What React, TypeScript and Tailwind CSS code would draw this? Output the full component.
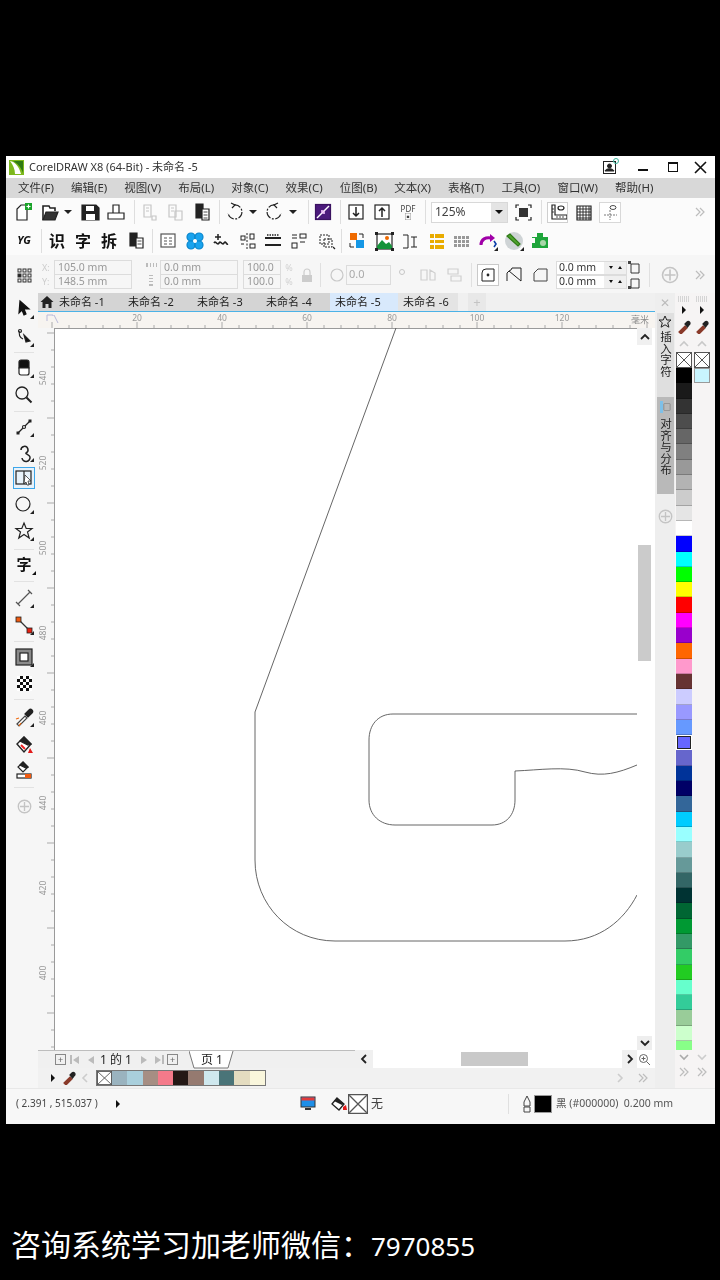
import React from "react";

const Ic = ({ w = 24, h = 24, className = "", children }: { w?: number; h?: number; className?: string; children?: React.ReactNode }) => (
  <svg width={w} height={h} viewBox={`0 0 ${w} ${h}`} className={`shrink-0 ${className}`} fill="none" stroke="#222" strokeWidth={1.2}>
    {children}
  </svg>
);

const Caret = () => (
  <div className="flex h-6 w-3 shrink-0 items-center justify-center">
    <div className="h-0 w-0 border-x-[4px] border-t-[4px] border-x-transparent border-t-[#222]" />
  </div>
);
const Sep = ({ className = "" }: { className?: string }) => <div className={`h-6 w-px shrink-0 bg-[#dedede] ${className}`} />;
const HSep = () => <div className="mx-auto h-px w-5 shrink-0 bg-[#e2e2e2]" />;
const Corner = () => <path d="M22 22h-4l4-4z" fill="#222" stroke="none" />;
const More = ({ className = "" }: { className?: string }) => (
  <svg width="14" height="12" viewBox="0 0 14 12" className={`shrink-0 ${className}`} fill="none" stroke="#bdbdbd" strokeWidth={1.2}>
    <path d="M3 2l4 4-4 4M7 2l4 4-4 4" />
  </svg>
);
const Plus = ({ size = 18, className = "" }: { size?: number; className?: string }) => (
  <svg width={size} height={size} viewBox="0 0 18 18" className={`shrink-0 ${className}`} fill="none" stroke="#c4c4c4" strokeWidth={1.6}>
    <circle cx="9" cy="9" r="7.5" />
    <path d="M9 3.5v11M3.5 9h11" />
  </svg>
);
const CrossBox = ({ className = "" }: { className?: string }) => (
  <svg viewBox="0 0 16 16" preserveAspectRatio="none" className={`block ${className}`} fill="#fff" stroke="#555" strokeWidth={1}>
    <rect x="0.5" y="0.5" width="15" height="15" />
    <path d="M1 1l14 14M15 1L1 15" />
  </svg>
);
const Dropper = ({ tip = "#8a3a2a" }: { tip?: string }) => (
  <Ic w={14} h={14}>
    <path d="M2 12l6-6 2 2-6 6z" fill={tip} stroke={tip} />
    <path d="M8 4l2-2a1.5 1.5 0 0 1 2.5 2.5L10.500 7z" fill="#222" stroke="#222" />
  </Ic>
);
const TriRight = ({ className = "" }: { className?: string }) => (
  <div className={`h-0 w-0 shrink-0 border-y-[4px] border-l-[4px] border-y-transparent border-l-[#111] ${className}`} />
);

const Toolbar1 = () => (
  <div className="flex h-[30px] items-center bg-[#fbfbfb] pb-[2px]">
    <Ic className="ml-[6px]"><path d="M5 20V9l4-4h6v15z" fill="#fff" /><rect x="13" y="3" width="7" height="7" fill="#1aa32a" stroke="none" /><path d="M16.500 4.500v4M14.500 6.500h4" stroke="#fff" /></Ic>
    <Ic className="ml-[2px]"><path d="M5 20V6h6l1 2h5v3" fill="#fff" strokeWidth={1.6} /><path d="M5 20l3-8h12l-3 8z" fill="#333" strokeWidth={1.2} /></Ic>
    <Caret />
    <Ic className="ml-1"><path d="M4 5h14l3 3v12H4z" fill="#222" /><rect x="8" y="6" width="8" height="5" fill="#fff" stroke="none" /><rect x="8" y="14" width="9" height="6" fill="#fff" stroke="none" /></Ic>
    <Ic className="ml-[2px]"><path d="M9 13V5h6v8M4 13h5M15 13h5v6H4v-6z" fill="#fff" /></Ic>
    <Sep className="ml-[6px]" />
    <Ic className="ml-[3px]"><g stroke="#c6c6c6"><path d="M6 5h7v12H6z" /><path d="M8 8h3M8 11h3" /><path d="M14 16h4v4h-4z" /></g></Ic>
    <Ic className="ml-[1px]"><g stroke="#c6c6c6"><path d="M6 5h7v12H6z" /><path d="M8 8h3M8 11h3" /><path d="M12 11h7v9h-7z" /></g></Ic>
    <Ic className="ml-[3px]"><path d="M6 4h7v14H6z" fill="#222" /><path d="M12 9h7v11h-7z" fill="#fff" /><path d="M13.500 12h4M13.500 15h4M13.500 18h4" strokeWidth={0.8} /></Ic>
    <Sep className="ml-[5px]" />
    <Ic className="ml-[3px]"><path d="M11 5a7 7 0 1 1-6 8" strokeDasharray="7 1.500 2 1.500" /><path d="M8 3l4 2-3 3" /></Ic>
    <Caret />
    <Ic className="ml-[3px]"><path d="M13 5a7 7 0 1 0 6 8" strokeDasharray="7 1.500 2 1.500" /><path d="M16 3l-4 2 3 3" /></Ic>
    <div className="ml-px"><Caret /></div>
    <Sep className="ml-[9px]" />
    <Ic className="ml-[2px]"><rect x="4.500" y="4.500" width="15" height="15" fill="#4b1a7c" stroke="#3a1260" /><path d="M6 18L18 6" stroke="#fff" strokeWidth={1.500} /><path d="M14 13l-3 0 0-3M10 11l3 0 0 3" stroke="#f5c6ff" /></Ic>
    <Sep className="ml-[5px]" />
    <Ic className="ml-[3px]"><rect x="5" y="5" width="14" height="14" fill="#fff" /><path d="M12 7v9M9 13l3 3 3-3" strokeWidth={1.500} /></Ic>
    <Ic className="ml-[2px]"><rect x="5" y="5" width="14" height="14" fill="#fff" /><path d="M12 17V8M9 11l3-3 3 3" strokeWidth={1.500} /></Ic>
    <div className="ml-[2px] flex h-6 w-6 shrink-0 flex-col items-center justify-center text-[8px] leading-[8px] text-[#444]">
      <span>PDF</span>
      <span className="text-[7px] leading-[7px]">▣</span>
    </div>
    <Sep className="ml-[5px]" />
    <div className="ml-[5px] flex h-[21px] w-[77px] shrink-0 items-center border border-[#d8d8d8] bg-white">
      <span className="flex-1 pl-[3px] text-[12px] text-[#444]">125%</span>
      <div className="flex h-full w-[16px] items-center justify-center bg-[#e4e4e4]">
        <div className="h-0 w-0 border-x-[4px] border-t-[4px] border-x-transparent border-t-[#111]" />
      </div>
    </div>
    <Ic className="ml-[3px]"><rect x="8" y="8" width="9" height="9" fill="#333" stroke="none" /><path d="M5 8V5h3M17 5h3v3M20 17v3h-3M8 20H5v-3" /></Ic>
    <Sep className="ml-[6px]" />
    <div className="ml-[5px] flex h-[21px] w-[21px] shrink-0 items-center justify-center border border-[#cfcfcf] bg-white">
      <Ic w={18} h={18}><path d="M3 2h3v10h12v4H3z" fill="#fff" /><ellipse cx="12" cy="5" rx="3" ry="2" /><path d="M3 6h2M3 9h2M8 13v2M11 13v2M14 13v2" strokeWidth={0.8} /></Ic>
    </div>
    <Ic className="ml-1"><path d="M5 6h14v14H5z" fill="#fff" /><path d="M5 9h14M5 12h14M5 15h14M5 18h14M8 6v14M11 6v14M14 6v14M17 6v14" strokeWidth={0.9} /></Ic>
    <div className="ml-[3px] flex h-[21px] w-[22px] shrink-0 items-center justify-center border border-[#d8d8d8] bg-white">
      <Ic w={18} h={18}><path d="M9 7v10M3 12h13" strokeDasharray="2 1" strokeWidth={0.8} stroke="#555" /><ellipse cx="12" cy="4.500" rx="3" ry="2" strokeWidth={0.8} /></Ic>
    </div>
    <More className="ml-auto mr-[8px]" />
  </div>
);

const Toolbar2 = () => (
  <div className="flex h-[27px] items-center bg-[#fbfbfb] pb-[2px]">
    <span className="ml-[4px] w-7 shrink-0 text-center text-[11px] font-bold italic text-[#111]">YG</span>
    <Sep className="ml-[3px]" />
    <span className="ml-[3px] w-6 shrink-0 text-center text-[16px] font-bold leading-none text-[#111]">识</span>
    <span className="ml-[2px] w-6 shrink-0 text-center text-[16px] font-bold leading-none text-[#111]">字</span>
    <span className="ml-[2px] w-6 shrink-0 text-center text-[16px] font-bold leading-none text-[#111]">拆</span>
    <Ic className="ml-[3px]"><path d="M6 4h7v13H6z" fill="#222" /><path d="M12 9h7v10h-7z" fill="#fff" /><path d="M13.500 12h4M13.500 15h4" strokeWidth={0.8} /></Ic>
    <Sep className="ml-[4px]" />
    <Ic className="ml-[3px]"><rect x="5" y="5" width="14" height="13" fill="#fff" stroke="#555" /><path d="M8 9h3M13 9h3M8 12h3M13 12h3M8 15h3M13 15h3" stroke="#555" /></Ic>
    <Ic className="ml-[3px]"><g fill="#19a3ee" stroke="#0a86cc"><circle cx="8" cy="8" r="4" /><circle cx="16" cy="8" r="4" /><circle cx="8" cy="16" r="4" /><circle cx="16" cy="16" r="4" /></g><circle cx="12" cy="12" r="2" fill="#fff" stroke="none" /></Ic>
    <Ic className="ml-[2px]"><path d="M5 14c2-3 3 3 5 0s3 3 5 0 2 2 4 1" strokeWidth={1.600} /><path d="M9 5v6M6 8h6" strokeWidth={1.500} /></Ic>
    <Ic className="ml-[2px]"><g strokeWidth={1}><rect x="6" y="7" width="4" height="4" /><rect x="15" y="5" width="4" height="5" /><rect x="15" y="15" width="5" height="4" /><path d="M12 4v17" strokeDasharray="2 1.500" /><path d="M6 15h3" /></g></Ic>
    <Ic className="ml-[2px]"><path d="M4 9h16M4 16h16" strokeWidth={2} /><path d="M6 6h12" strokeDasharray="1.500 1" strokeWidth={1.500} /></Ic>
    <Ic className="ml-[2px]"><g strokeWidth={1}><rect x="13" y="5" width="6" height="4" /><rect x="5" y="14" width="5" height="5" /><path d="M5 6h5M5 9h5M13 13h5" /></g></Ic>
    <Ic className="ml-[3px]"><g strokeDasharray="2 1" strokeWidth={1}><rect x="6" y="6" width="9" height="9" /><rect x="10" y="10" width="8" height="8" /></g><path d="M19 18l2 2" /></Ic>
    <Sep className="ml-[3px]" />
    <Ic className="ml-[3px]"><rect x="5" y="4" width="7" height="7" fill="#ef6a00" stroke="none" /><rect x="11" y="11" width="8" height="8" fill="#1597e5" stroke="none" /><path d="M14 5h4v4M5 14v4h4" strokeWidth={1} /></Ic>
    <Ic className="ml-[3px]"><rect x="5" y="5" width="15" height="15" fill="#fff" /><path d="M5 17l5-6 4 4 3-2 3 4v3H5z" fill="#14933a" stroke="none" /><circle cx="15" cy="9" r="2" fill="#ef6a00" stroke="none" /><path d="M3 3h3v3H3zM19 3h3v3h-3zM3 19h3v3H3zM19 19h3v3h-3z" fill="#222" stroke="none" /></Ic>
    <Ic className="ml-[3px]"><path d="M4 6h5v13H4M12 8h6M12 18h6M15 8v10" strokeWidth={1} /></Ic>
    <Ic className="ml-[2px]"><path d="M5 5h4v4H5zM5 11h4v3H5zM5 16h4v4H5zM10 5h9v4h-9zM10 11h9v3h-9zM10 16h9v4h-9z" fill="#e9ac00" stroke="none" /></Ic>
    <Ic><g fill="#999" stroke="none"><path d="M5 7h3v3H5zM9 7h3v3H9zM13 7h3v3h-3zM17 7h3v3h-3zM5 11h3v3H5zM9 11h3v3H9zM13 11h3v3h-3zM17 11h3v3h-3zM5 15h3v3H5zM9 15h3v3H9zM13 15h3v3h-3zM17 15h3v3h-3z" /></g></Ic>
    <Ic className="ml-[3px]"><path d="M5 16c0-6 5-8 10-7" stroke="#a000a8" strokeWidth={3} /><path d="M14 5l5 4-5 4z" fill="#a000a8" stroke="none" /><path d="M18 12l2 3-2 3" stroke="#0a3ea8" strokeWidth={1.600} /><Corner /></Ic>
    <Ic className="ml-[2px]"><circle cx="12" cy="12" r="9" fill="#cfd4d6" stroke="none" /><path d="M5 7l11 10 2-2L8 5z" fill="#4fa32e" stroke="#2f7a16" /><Corner /></Ic>
    <Ic className="ml-[2px]"><path d="M9 4h6v4h5v11H4v-5h3V9H4V8h5z" fill="#1ea53b" stroke="none" /><circle cx="15" cy="14" r="3" fill="#a9d6a9" stroke="none" /></Ic>
  </div>
);

const Field = ({ children, w }: { children: React.ReactNode; w: string }) => (
  <div className={`flex h-[15px] items-center border border-[#dcdcdc] pl-[3px] text-[10.500px] leading-none text-[#999] ${w}`}>{children}</div>
);

const PropertyBar = () => (
  <div className="flex h-[38px] items-center bg-[#f6f6f6] pt-[1px]">
    <Ic className="ml-[6px]" ><g strokeWidth={1} stroke="#333"><rect x="6" y="6" width="3" height="3" /><rect x="11" y="6" width="3" height="3" /><rect x="16" y="6" width="3" height="3" /><rect x="6" y="11" width="3" height="3" fill="#222" /><rect x="11" y="11" width="3" height="3" /><rect x="16" y="11" width="3" height="3" /><rect x="6" y="16" width="3" height="3" /><rect x="11" y="16" width="3" height="3" /><rect x="16" y="16" width="3" height="3" /></g></Ic>
    <div className="ml-[6px] flex w-[8px] shrink-0 flex-col text-[9px] leading-[14px] text-[#ccc]"><span>X:</span><span>Y:</span></div>
    <div className="ml-[4px] flex w-[78px] shrink-0 flex-col">
      <Field w="w-full">105.0 mm</Field>
      <Field w="w-full -mt-px">148.5 mm</Field>
    </div>
    <div className="ml-[12px] flex w-[14px] shrink-0 flex-col items-center gap-[8px]">
      <div className="h-[4px] w-[11px] border-x border-[#bbb] bg-[repeating-linear-gradient(90deg,#bbb_0_1px,transparent_1px_3px)]" />
      <div className="h-[11px] w-[4px] border-y border-[#bbb] bg-[repeating-linear-gradient(0deg,#bbb_0_1px,transparent_1px_3px)]" />
    </div>
    <div className="ml-[2px] flex w-[78px] shrink-0 flex-col">
      <Field w="w-full">0.0 mm</Field>
      <Field w="w-full -mt-px">0.0 mm</Field>
    </div>
    <div className="ml-[5px] flex w-[38px] shrink-0 flex-col">
      <Field w="w-full">100.0</Field>
      <Field w="w-full -mt-px">100.0</Field>
    </div>
    <div className="ml-[2px] flex w-[12px] shrink-0 flex-col text-center text-[9px] leading-[14px] text-[#d2d2d2]"><span>%</span><span>%</span></div>
    <Ic w={14} h={16} className="ml-[5px]"><path d="M4 8V5a3 3 0 0 1 6 0v3" stroke="#ccc" /><rect x="2" y="8" width="10" height="7" fill="#ccc" stroke="none" /></Ic>
    <div className="ml-[6px] h-6 w-px shrink-0 bg-[#e0e0e0]" />
    <Ic w={16} h={16} className="ml-[8px]"><circle cx="8" cy="8" r="6" stroke="#c8c8c8" /></Ic>
    <div className="ml-[1px] flex h-[20px] w-[45px] shrink-0 items-center border border-[#dcdcdc] bg-[#f6f6f6] pl-[2px] text-[11px] text-[#aaa]">0.0</div>
    <div className="ml-[8px] h-[6px] w-[6px] shrink-0 -translate-y-[3px] rounded-full border border-[#c6c6c6]" />
    <Ic w={20} h={18} className="ml-[13px]"><g stroke="#cfcfcf"><path d="M3 4h6v10H3zM12 4l5 3v7h-5z" /></g></Ic>
    <Ic w={20} h={18} className="ml-[6px]"><g stroke="#cfcfcf"><path d="M4 3h10v5H4zM7 10h10v5H7z" /></g></Ic>
    <div className="ml-[7px] h-6 w-px shrink-0 bg-[#e0e0e0]" />
    <div className="ml-[5px] flex h-[22px] w-[22px] shrink-0 items-center justify-center border border-[#c9c9c9] bg-white">
      <Ic w={18} h={18}><path d="M3 15V7a4 4 0 0 1 4-4h8v12z" strokeWidth={1} /><circle cx="9" cy="9" r="0.800" fill="#222" /></Ic>
    </div>
    <Ic w={18} h={18} className="ml-[6px]"><path d="M2 15V7l2-2M4 5a4 4 0 0 0 3-3h9v13z" strokeWidth={1} fill="none" /></Ic>
    <Ic w={18} h={18} className="ml-[8px]"><path d="M3 15V7l4-4h9v12z" strokeWidth={1} stroke="#444" /></Ic>
    <div className="ml-[7px] flex w-[71px] shrink-0 flex-col">
      {["0.0 mm", "0.0 mm"].map((v, i) => (
        <div key={i} className="flex h-[14px] items-center border border-[#dcdcdc] bg-white text-[10.500px] text-[#333]">
          <span className="flex-1 pl-[2px] leading-none">{v}</span>
          <span className="flex h-full w-[22px] items-center justify-around bg-[#efefef] px-[2px]">
            <span className="h-0 w-0 border-x-[2.500px] border-t-[3px] border-x-transparent border-t-[#111]" />
            <span className="h-0 w-0 border-x-[2.500px] border-b-[3px] border-x-transparent border-b-[#111]" />
          </span>
        </div>
      ))}
    </div>
    <Ic w={14} h={28} className="ml-[1px]"><path d="M3 3h8v9H3zM3 18h8v9H3z" strokeWidth={0.9} /><path d="M0 0h3v3H0zM0 25h3v3H0z" fill="#444" stroke="none" /></Ic>
    <div className="ml-[7px] h-6 w-px shrink-0 bg-[#e0e0e0]" />
    <Plus className="ml-[11px]" />
    <More className="ml-auto mr-[8px]" />
  </div>
);

const tabNames = ["未命名 -1", "未命名 -2", "未命名 -3", "未命名 -4"];

const DocTabs = () => (
  <div className="flex h-[18px] items-stretch bg-[#f0f0f0] text-[11px] leading-[18px] text-[#222]">
    <div className="flex w-[292px] shrink-0 items-center bg-[#d4d4d4]">
      <svg width="14" height="14" viewBox="0 0 14 14" className="ml-[2px] shrink-0"><path d="M7 1L0.500 7h2v6h3V9h3v4h3V7h2z" fill="#222" /></svg>
      <div className="ml-[5px] flex gap-[21px]">
        {tabNames.map((t) => (
          <span key={t} className="w-[48px] whitespace-nowrap">{t}</span>
        ))}
      </div>
    </div>
    <div className="w-[68px] shrink-0 whitespace-nowrap bg-[#d8e9fc] pl-[5px]">未命名 -5</div>
    <div className="w-[60px] shrink-0 whitespace-nowrap bg-[#e4e4e4] pl-[5px]">未命名 -6</div>
    <div className="ml-[10px] flex w-[18px] shrink-0 items-center justify-center bg-[#e8e8e8] text-[13px] text-[#c4c4c4]">+</div>
  </div>
);

const HRuler = () => (
  <svg width="617" height="16" viewBox="0 0 617 16" className="block shrink-0 bg-[#f7f4f0]">
    <path d="M16 3l4 8M9 3h6v1M9 3v6" stroke="#b9b9d9" fill="none" />
    {[[99, "20"], [184, "40"], [269, "60"], [354, "80"], [439, "100"], [524, "120"]].map(([x, t]) => (
      <text key={t} x={x as number} y="9" textAnchor="middle" fontSize="8.500" fill="#999">{t}</text>
    ))}
    <text x="602" y="11" textAnchor="middle" fontSize="9" fill="#888">毫米</text>
    {Array.from({ length: 36 }, (_, i) => (
      <path key={i} d={`M${14 + i * 17} ${i % 5 === 0 ? 10 : 13}V16`} stroke="#aaa" />
    ))}
  </svg>
);

const VRuler = () => (
  <svg width="16" height="722" viewBox="0 0 16 722" className="block shrink-0 bg-[#f6f6f6]">
    {[[50, "540"], [135, "520"], [220, "500"], [305, "480"], [390, "460"], [475, "440"], [560, "420"], [645, "400"]].map(([y, t]) => (
      <text key={t} transform={`translate(8 ${y}) rotate(-90)`} textAnchor="middle" fontSize="8.500" fill="#999">{t}</text>
    ))}
    {Array.from({ length: 43 }, (_, i) => (
      <path key={i} d={`M${i % 5 === 0 ? 9 : 13} ${5 + i * 17}H16`} stroke="#aaa" />
    ))}
  </svg>
);

const Canvas = () => (
  <div className="relative h-[722px] w-[583px] shrink-0 border-l border-t border-[#9a9a9a] bg-white">
    <svg width="583" height="722" viewBox="54 328 583 722" className="absolute -left-px -top-px" fill="none" stroke="#555" strokeWidth={0.9}>
      <path d="M396 328L255 712V860C255 905 290 941 335 941H565C600 941 624 920 637 895" />
      <path d="M637 714H393C378 714 369 725 369 740V800C369 815 380 825 395 825H492C506 825 515 815 515 800V771C540 770 565 766 585 772C603 777 618 773 637 765" />
    </svg>
  </div>
);

const Chevron = ({ d }: { d: string }) => (
  <svg width="10" height="10" viewBox="0 0 10 10" fill="none" stroke="#222" strokeWidth={1.800}><path d={d} /></svg>
);

const VScroll = () => (
  <div className="flex h-[722px] w-[15px] shrink-0 flex-col bg-white">
    <div className="flex h-[17px] items-center justify-center bg-[#f0f0f0]"><Chevron d="M1 7l4-4 4 4" /></div>
    <div className="mx-px mt-[200px] h-[116px] bg-[#cbcbcb]" />
    <div className="flex-1" />
    <div className="flex h-[14px] items-center justify-center bg-[#eeeeee]"><Chevron d="M1 3l4 4 4-4" /></div>
  </div>
);

const PageRow = () => (
  <div className="flex h-[18px] items-center bg-white">
    <div className="flex h-full w-[317px] shrink-0 items-center border-t border-[#bdbdbd] bg-[#f0f0f0] pl-[17px] text-[12px] leading-none text-[#222]">
      <span className="flex h-[11px] w-[11px] shrink-0 items-center justify-center border border-[#888] text-[9px] leading-none text-[#666]">+</span>
      <span className="ml-[4px] w-[3px] shrink-0 border-l-2 border-[#bbb] text-[9px] leading-none">&nbsp;</span>
      <span className="h-0 w-0 shrink-0 border-y-[4px] border-r-[6px] border-y-transparent border-r-[#bbb]" />
      <span className="ml-[9px] h-0 w-0 shrink-0 border-y-[4px] border-r-[6px] border-y-transparent border-r-[#bbb]" />
      <span className="ml-[6px] shrink-0 whitespace-nowrap">1 的 1</span>
      <span className="ml-[9px] h-0 w-0 shrink-0 border-y-[4px] border-l-[6px] border-y-transparent border-l-[#bbb]" />
      <span className="ml-[8px] h-0 w-0 shrink-0 border-y-[4px] border-l-[6px] border-y-transparent border-l-[#bbb]" />
      <span className="w-[3px] shrink-0 border-r-2 border-[#bbb] text-[9px] leading-none">&nbsp;</span>
      <span className="ml-[3px] flex h-[11px] w-[11px] shrink-0 items-center justify-center border border-[#888] text-[9px] leading-none text-[#666]">+</span>
      <div className="relative ml-[11px] flex h-[18px] w-[46px] shrink-0 items-center justify-center">
        <svg width="46" height="18" viewBox="0 0 46 18" className="absolute inset-0" fill="#fff" stroke="#777"><path d="M0 0L5 17H39L44 0" /></svg>
        <span className="relative whitespace-nowrap text-[12px]">页 1</span>
      </div>
    </div>
    <div className="flex h-full w-[18px] shrink-0 items-center justify-center bg-[#f0f0f0]"><Chevron d="M7 1L3 5l4 4" /></div>
    <div className="flex h-full flex-1 items-center">
      <div className="ml-[88px] h-[14px] w-[67px] bg-[#c9c9c9]" />
    </div>
    <div className="flex h-full w-[15px] shrink-0 items-center justify-center bg-[#f0f0f0]"><Chevron d="M3 1l4 4-4 4" /></div>
    <div className="flex h-full w-[15px] shrink-0 items-center justify-center">
      <svg width="13" height="13" viewBox="0 0 13 13" fill="none" stroke="#666"><circle cx="5.500" cy="5.500" r="4" /><path d="M8.500 8.500l3.500 3.500M3.500 5.500h4M5.500 3.500v4" /></svg>
    </div>
    <div className="w-[3px] shrink-0" />
  </div>
);

const recent = ["#9ab3bf", "#a9cfdc", "#a68e83", "#f47a8a", "#231815", "#957a70", "#cfe8ee", "#4a7478", "#e4dcc0", "#f9f6dc"];

const BottomPalette = () => (
  <div className="flex h-[20px] items-center bg-[#f1f1f1]">
    <TriRight className="ml-[13px]" />
    <div className="ml-[7px]"><Dropper /></div>
    <svg width="10" height="12" viewBox="0 0 10 12" fill="none" stroke="#ccc" strokeWidth={1.600} className="ml-[4px] shrink-0"><path d="M7 2L3 6l4 4" /></svg>
    <div className="ml-[6px] flex h-[16px] items-stretch border border-[#777]">
      <CrossBox className="h-[14px] w-[15px]" />
      {recent.map((c, i) => (
        <div key={i} className="w-[15.300px]" style={{ backgroundColor: c }} />
      ))}
    </div>
    <svg width="10" height="12" viewBox="0 0 10 12" fill="none" stroke="#ccc" strokeWidth={1.600} className="ml-auto shrink-0"><path d="M3 2l4 4-4 4" /></svg>
    <More className="ml-[11px] mr-[5px]" />
  </div>
);

const Docker = () => (
  <div className="flex h-[795px] w-[20px] shrink-0 flex-col items-center bg-[#eeeeee]">
    <span className="mt-[4px] h-[12px] text-[12px] leading-[12px] text-[#bbb]">✕</span>
    <div className="mt-[4px] flex h-[84px] w-[17px] flex-col items-center bg-[#dfdfdf] pt-[2px]">
      <svg width="14" height="14" viewBox="0 0 14 14" fill="none" stroke="#222"><path d="M7 1l1.800 4h4.200l-3.300 2.800 1.200 4.400L7 9.800l-3.900 2.400 1.200-4.400L1 5h4.200z" /></svg>
      <span className="mt-[2px] text-[11.500px] leading-[14px] text-[#222] [writing-mode:vertical-rl]">插入字符</span>
    </div>
    <div className="flex h-[97px] w-[17px] flex-col items-center bg-[#b9b9b9] pt-[4px]">
      <span className="h-[12px] w-[10px] border-l-[3px] border-[#7ec0e8] text-[8px] leading-[12px] text-[#333]">□</span>
      <span className="mt-[5px] text-[11.500px] leading-[14px] text-[#222] [writing-mode:vertical-rl]">对齐与分布</span>
    </div>
    <Plus size={15} className="mt-[15px]" />
  </div>
);

const colors = ["#000000", "#1a1a1a", "#333333", "#4d4d4d", "#666666", "#808080", "#999999", "#b3b3b3", "#cccccc", "#e5e5e5", "#ffffff", "#0000ff", "#00ffff", "#00ff00", "#ffff00", "#ff0000", "#ff00ff", "#9900cc", "#ff6600", "#ff99cc", "#663333", "#ccccff", "#9999ff", "#6699ff", "#6666ff", "#6666cc", "#003399", "#000066", "#336699", "#00ccff", "#99ffff", "#99cccc", "#669999", "#336666", "#003333", "#006633", "#009933", "#339966", "#33cc66", "#22cc22", "#66ffcc", "#33cc99", "#99cc99", "#ccffcc", "#88ff88"];

const PalHead = () => (
  <div className="flex h-[59px] shrink-0 flex-col items-center">
    <div className="mt-[3px] h-[6px] w-[12px] bg-[repeating-linear-gradient(90deg,#d5d5d5_0_1px,transparent_1px_2px)]" />
    <TriRight className="mt-[4px]" />
    <div className="mt-[6px]"><Dropper /></div>
    <svg width="12" height="8" viewBox="0 0 12 8" fill="none" stroke="#c8c8c8" strokeWidth={1.600} className="mt-[6px]"><path d="M2 6l4-4 4 4" /></svg>
  </div>
);
const PalFoot = ({ stroke = "#aaa" }: { stroke?: string }) => (
  <div className="flex h-[38px] shrink-0 flex-col items-center">
    <svg width="12" height="8" viewBox="0 0 12 8" fill="none" stroke={stroke} strokeWidth={1.600} className="mt-[3px]"><path d="M2 2l4 4 4-4" /></svg>
    <More className="mt-[5px]" />
  </div>
);

const Palettes = () => (
  <div className="flex h-[795px] shrink-0 bg-[#f6f4f4]">
    <div className="flex w-[18px] flex-col">
      <PalHead />
      <div className="flex-1 overflow-hidden px-px">
        <CrossBox className="h-[16px] w-[16px]" />
        {colors.map((c) => (
          <div key={c} className={c === "#6666ff" ? "h-[15.300px] border border-white outline-1 -outline-offset-2 outline-[#222]" : "h-[15.300px] border-b border-black/20"} style={{ backgroundColor: c }} />
        ))}
      </div>
      <PalFoot />
    </div>
    <div className="flex w-[18px] flex-col">
      <PalHead />
      <div className="flex-1 px-px">
        <CrossBox className="h-[16px] w-[16px]" />
        <div className="h-[15px] w-[16px] border border-[#9a9a9a] bg-[#c9f5ff]" />
      </div>
      <PalFoot stroke="#ccc" />
    </div>
  </div>
);

const StatusBar = () => (
  <div className="flex h-[36px] items-center border-t border-[#e8e8e8] bg-[#f7f7f7] pb-[6px] text-[10.500px] text-[#444]">
    <span className="ml-[10px] w-[92px] shrink-0 whitespace-nowrap text-[10px]">( 2.391 , 515.037 )</span>
    <TriRight className="ml-[8px]" />
    <svg width="16" height="16" viewBox="0 0 16 16" className="ml-[180px] shrink-0"><rect x="1" y="1" width="14" height="10" fill="#1e8fe8" stroke="#333" /><rect x="1.500" y="1.500" width="13" height="3" fill="#e23a3a" /><rect x="5" y="12" width="6" height="2" fill="#333" /></svg>
    <svg width="18" height="16" viewBox="0 0 18 16" className="ml-[14px] shrink-0" fill="none"><path d="M7 2l7 6-5 6-7-6z" fill="#fff" stroke="#222" strokeWidth={1.300} /><path d="M4 5l3-3 7 6-2 1z" fill="#222" /><path d="M13 11l3-2 1 5h-4z" fill="#e21a1a" /></svg>
    <CrossBox className="h-[20px] w-[20px] shrink-0" />
    <span className="ml-[3px] text-[12px] text-[#444]">无</span>
    <div className="ml-[125px] h-[20px] w-px shrink-0 bg-[#e0e0e0]" />
    <svg width="12" height="18" viewBox="0 0 12 18" fill="none" stroke="#444" className="ml-[12px] shrink-0"><path d="M6 1l3 6v4H3V7zM3 12h6v5H3z" /></svg>
    <div className="ml-[1px] h-[18px] w-[18px] shrink-0 border border-[#999] bg-black" />
    <span className="ml-[4px] whitespace-nowrap text-[#555]">黑 (#000000)&nbsp; 0.200 mm</span>
  </div>
);

const menu = ["文件(F)", "编辑(E)", "视图(V)", "布局(L)", "对象(C)", "效果(C)", "位图(B)", "文本(X)", "表格(T)", "工具(O)", "窗口(W)", "帮助(H)"];
const LeftIcon = ({ className = "", children }: { className?: string; children: React.ReactNode }) => (
  <Ic className={`mx-auto ${className}`}>{children}</Ic>
);

const Toolbox = () => (
  <div className="flex h-[795px] w-[32px] shrink-0 flex-col bg-[#f6f6f6] pl-[4px]">
    <LeftIcon className="mt-[4px]"><path d="M8 4l9 8-5 0 2 5-2 1-2-5-3 3z" fill="#111" stroke="#111" /><Corner /></LeftIcon>
    <LeftIcon className="mt-[4px]"><path d="M8 6c-2 3 0 7 3 8" /><circle cx="8" cy="6" r="1.500" /><path d="M12 10l6 6-4 1z" fill="#111" /><Corner /></LeftIcon>
    <div className="mt-[3px]"><HSep /></div>
    <LeftIcon className="mt-[3px]"><path d="M7 6a2 2 0 0 1 2-2h6a2 2 0 0 1 2 2v6H7z" fill="#111" /><path d="M7 12h10v5a2 2 0 0 1-2 2H9a2 2 0 0 1-2-2z" fill="#fff" /><Corner /></LeftIcon>
    <LeftIcon className="mt-[3px]"><circle cx="10" cy="10" r="6" strokeWidth={1.300} /><path d="M14.500 14.500l5 5" strokeWidth={2} /></LeftIcon>
    <div className="mt-[4px]"><HSep /></div>
    <LeftIcon className="mt-[3px]"><path d="M6 18L18 6" /><rect x="4.500" y="16.500" width="3" height="3" fill="#222" stroke="none" /><rect x="16.500" y="4.500" width="3" height="3" fill="#222" stroke="none" /><circle cx="12" cy="12" r="1.500" fill="#fff" /><Corner /></LeftIcon>
    <LeftIcon className="mt-px"><path d="M9 10a3.500 3.500 0 1 1 5 3c-1 .8 4 2 4 4a4 4 0 0 1-8 1" strokeWidth={1.500} /><Corner /></LeftIcon>
    <div className="mx-auto mt-[3px] flex h-[22px] w-[22px] shrink-0 items-center justify-center border border-[#3da6ea] bg-[#e8f2fa]">
      <Ic w={18} h={18}><rect x="1" y="2" width="15" height="13" strokeWidth={1.200} /><path d="M9 2v13" /><path d="M10 6l6 6-3 0 1 4-2 0-1-3-2 2z" fill="#fff" stroke="#333" strokeWidth={0.800} /></Ic>
    </div>
    <LeftIcon className="mt-[3px]"><circle cx="11" cy="12" r="7" strokeWidth={1.200} /><Corner /></LeftIcon>
    <LeftIcon className="mt-[3px]"><path d="M12 4l2.200 5.500H20l-4.500 3.500 1.700 6L12 15.500 6.800 19l1.700-6L4 9.500h5.800z" strokeWidth={1.200} /><Corner /></LeftIcon>
    <div className="mt-[6px]"><HSep /></div>
    <div className="relative mx-auto mt-[2px] flex h-6 w-6 shrink-0 items-center justify-center text-[15px] font-bold leading-none text-[#111]">字
      <span className="absolute bottom-[1px] right-0 h-0 w-0 border-b-[4px] border-l-[4px] border-b-[#111] border-l-transparent" />
    </div>
    <div className="mt-[5px]"><HSep /></div>
    <LeftIcon className="mt-[4px]"><path d="M6 18L18 6M4 16l4 4M16 4l4 4" stroke="#555" /><Corner /></LeftIcon>
    <LeftIcon className="mt-[3px]"><path d="M7 7l11 11" stroke="#333" strokeWidth={1.300} /><rect x="4" y="4" width="5" height="5" fill="#ef5a10" stroke="#222" strokeWidth={0.800} /><rect x="15" y="15" width="5" height="5" fill="#e82010" stroke="#222" strokeWidth={0.800} /><Corner /></LeftIcon>
    <div className="mt-[4px]"><HSep /></div>
    <LeftIcon className="mt-[3px]"><rect x="4" y="4" width="16" height="16" fill="#8a8a8a" /><rect x="8" y="8" width="8" height="8" fill="#fff" /><Corner /></LeftIcon>
    <LeftIcon className="mt-[2px]"><rect x="5" y="5" width="15" height="15" fill="#111" stroke="none" /><path d="M5 5h3v3H5zM11 5h3v3h-3zM17 5h3v3h-3zM8 8h3v3H8zM14 8h3v3h-3zM5 11h3v3H5zM11 11h3v3h-3zM17 11h3v3h-3zM8 14h3v3H8zM14 14h3v3h-3zM5 17h3v3H5zM11 17h3v3h-3zM17 17h3v3h-3z" fill="#fff" stroke="none" /></LeftIcon>
    <div className="mt-[4px]"><HSep /></div>
    <LeftIcon className="mt-[5px]"><path d="M5 19l8-8 2 2-8 8z" fill="#fff" stroke="#444" /><path d="M13 9l4-4a2 2 0 0 1 3 3l-4 4z" fill="#222" /><path d="M4 14l3-1M9 18l-2 3" stroke="#ef6a10" /><Corner /></LeftIcon>
    <LeftIcon className="mt-[4px]"><path d="M12 4l7 7-7 8-7-8z" fill="#fff" strokeWidth={1.400} /><path d="M8 8l4-4 7 7-3 1z" fill="#222" /><path d="M9 12l4 4" stroke="#e22" strokeWidth={2} /><path d="M18 15l3 5h-5z" fill="#e21a1a" stroke="none" /></LeftIcon>
    <LeftIcon className="mt-[2px]"><path d="M11 3l5 5-5 5-5-5z" fill="#fff" /><path d="M8 6l3-3 5 5-2 1z" fill="#222" /><rect x="5" y="15" width="14" height="4" fill="#fff" /><rect x="13" y="15" width="6" height="4" fill="#ef5a10" stroke="none" /></LeftIcon>
    <div className="mt-[4px]"><HSep /></div>
    <div className="mx-auto mt-[11px]"><Plus size={15} /></div>
  </div>
);

export default function App() {
  return (
    <div className="flex h-[1280px] w-[720px] flex-col overflow-hidden bg-black font-['Noto_Sans','Noto_Sans_CJK_SC',sans-serif]">
      <div className="h-[156px] shrink-0" />
      <div className="ml-[6px] flex h-[968px] w-[709px] shrink-0 flex-col overflow-hidden bg-[#f6f6f6] blur-[0.5px]">
        <div className="flex h-[22px] shrink-0 items-center bg-white">
          <svg width="15" height="15" viewBox="0 0 15 15" className="ml-[3px] shrink-0"><rect width="15" height="15" fill="#7db81c" /><path d="M1 1c5 1 9 5 11 13H6C6 9 4 5 1 1z" fill="#fff" /><path d="M4 1h10v12C12 7 8 3 4 1z" fill="#2f7a14" /></svg>
          <span className="ml-[5px] text-[11px] text-[#333]">CorelDRAW X8 (64-Bit) - 未命名 -5</span>
          <svg width="18" height="18" viewBox="0 0 18 18" className="ml-auto shrink-0" fill="none" stroke="#222"><rect x="1.500" y="3.500" width="12" height="12" /><circle cx="7.500" cy="8" r="2" fill="#222" /><path d="M3 13c1-3 8-3 9 0z" fill="#222" /><circle cx="14" cy="3" r="2.500" stroke="#3ab39b" /></svg>
          <div className="ml-[18px] mt-[6px] h-[2px] w-[10px] shrink-0 bg-[#111]" />
          <div className="ml-[20px] h-[10px] w-[10px] shrink-0 border border-t-2 border-[#111]" />
          <svg width="13" height="13" viewBox="0 0 13 13" className="ml-[16px] mr-[8px] shrink-0" stroke="#111" strokeWidth={1.600}><path d="M1 1l11 11M12 1L1 12" /></svg>
        </div>
        <div className="flex h-[20px] shrink-0 items-center gap-[17.100px] bg-[#d8d8d8] pl-[12px] text-[11.500px] leading-none text-[#333]">
          {menu.map((m) => (
            <span key={m} className="whitespace-nowrap">{m}</span>
          ))}
        </div>
        <Toolbar1 />
        <Toolbar2 />
        <PropertyBar />
        <div className="flex h-[795px] shrink-0">
          <Toolbox />
          <div className="flex w-[617px] shrink-0 flex-col">
            <DocTabs />
            <div className="h-px bg-[#4cb2e6]" />
            <HRuler />
            <div className="flex">
              <VRuler />
              <Canvas />
              <VScroll />
              <div className="w-[3px] shrink-0 bg-white" />
            </div>
            <PageRow />
            <BottomPalette />
          </div>
          <Docker />
          <Palettes />
          <div className="w-[4px] shrink-0 bg-[#f6f4f4]" />
        </div>
        <StatusBar />
      </div>
      <div className="ml-[11px] mt-[101px] whitespace-nowrap text-[30px] leading-[40px] text-white">
        咨询系统学习加老师微信：<span className="text-[26px]">7970855</span>
      </div>
    </div>
  );
}
